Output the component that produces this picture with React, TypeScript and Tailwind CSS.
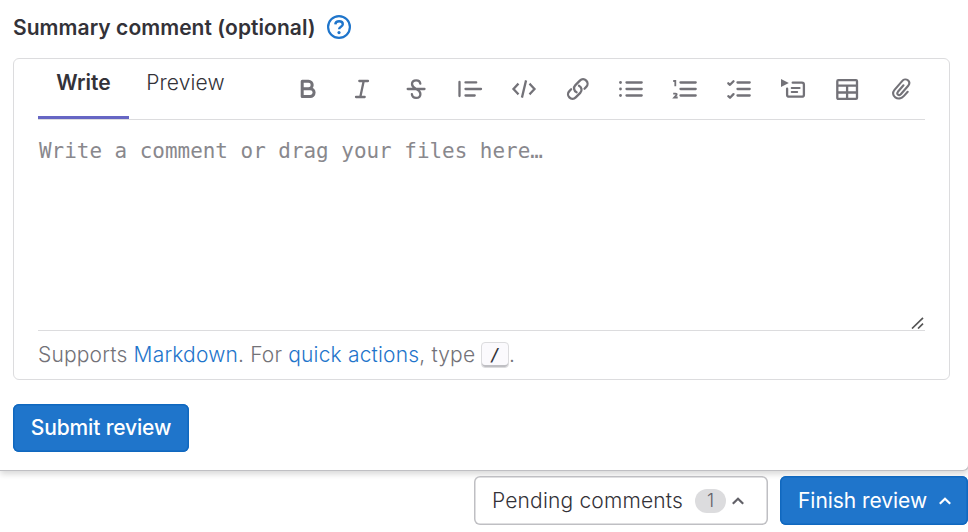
import React from "react";

type IconProps = { children: React.ReactNode };

function ToolIcon({ children }: IconProps) {
  return (
    <button className="flex h-6 w-6 shrink-0 items-center justify-center text-[#737278]">
      <svg
        className="h-6 w-6 overflow-visible"
        viewBox="0 0 24 24"
        fill="none"
        stroke="currentColor"
        strokeWidth="2.3"
        strokeLinecap="round"
        strokeLinejoin="round"
      >
        {children}
      </svg>
    </button>
  );
}

function Toolbar() {
  return (
    <div className="mt-[18px] flex gap-[29.9px]">
      <ToolIcon>
        <path strokeWidth="3" d="M6.200 4.300h6.300a3.700 3.700 0 0 1 0 7.400H6.200zM6.200 11.700h8a3.900 3.900 0 0 1 0 7.800h-8z" />
      </ToolIcon>
      <ToolIcon>
        <path d="M9.300 4H18M6 20h8.700M13.700 4l-3.400 16" />
      </ToolIcon>
      <ToolIcon>
        <path d="M3.700 12h16.800M16.300 6.600c-.2-2-1.800-3.300-4.100-3.300-2.500 0-4.200 1.600-4.200 3.800 0 2.300 1.900 3.700 4.200 4.900 2.600 1.300 4.200 2.600 4.200 4.900 0 2.300-1.700 4-4.300 4-2.300 0-4-1.500-4.200-3.700" />
      </ToolIcon>
      <ToolIcon>
        <path d="M1.500 5v14M7.500 5.400h10.700M7.500 12h15.500M7.500 18.500h9.200" />
      </ToolIcon>
      <ToolIcon>
        <path strokeLinecap="square" strokeLinejoin="miter" d="M5.700 7.500 1.500 12l4.200 4.500M18.300 7.500l4.200 4.500-4.200 4.500M13.800 4.500l-3.600 15" />
      </ToolIcon>
      <ToolIcon>
        <path transform="translate(.8 0)" d="M13.190 8.688a4.500 4.500 0 0 1 1.242 7.244l-4.500 4.500a4.500 4.500 0 0 1-6.364-6.364l1.757-1.757m13.350-.622 1.757-1.757a4.500 4.500 0 0 0-6.364-6.364l-4.500 4.500a4.500 4.500 0 0 0 1.242 7.244" />
      </ToolIcon>
      <ToolIcon>
        <path d="M7.500 5.500H22.700M7.500 12H22.700M7.500 18.500H22.700" />
        <g fill="currentColor" stroke="none">
          <circle cx="1.500" cy="5.500" r="1.400" />
          <circle cx="1.500" cy="12" r="1.400" />
          <circle cx="1.500" cy="18.500" r="1.400" />
        </g>
      </ToolIcon>
      <ToolIcon>
        <path d="M7.500 5.500H22.700M7.500 12H22.700M7.500 18.500H22.700" />
        <path strokeWidth="1.800" strokeLinecap="butt" strokeLinejoin="miter" d="M.2 4h2.100v5.200M.2 16.600h2.300q1.500 0 1.100 1.200L1.200 20.500h3.500" />
      </ToolIcon>
      <ToolIcon>
        <path d="M10.500 5.500H22.700M10.500 12H22.700M10.500 18.500H22.700" />
        <path d="M1.300 6.300 3 7.800l3.500-3.600M1.300 19.200 3 20.700l3.500-3.600" />
      </ToolIcon>
      <ToolIcon>
        <path fill="currentColor" stroke="none" d="M0 2l7.800 4L0 9.900z" />
        <path d="M11.700 5.700h9.200a2 2 0 0 1 2 2v10a2 2 0 0 1-2 2H8.100a2 2 0 0 1-2-2v-6" />
        <path strokeWidth="2" d="M10.700 11h7.900M10.700 15h5.500" />
      </ToolIcon>
      <ToolIcon>
        <rect x="2.300" y="3.200" width="19.700" height="18.700" rx="1" />
        <path strokeLinecap="butt" d="M2.300 8.700H22M2.300 15.500H22M12.100 8.700v13.200" />
      </ToolIcon>
      <ToolIcon>
        <path strokeWidth="2.100" d="m18.700 14.800-3.700 4.100c-2.500 2.700-6 3.500-8.700 1.500-2.600-2-2.900-5-.8-7.500l7.600-8.800c1.700-2 4.200-2.100 5.800-.8 1.700 1.500 1.900 3.500.3 5.400l-7.400 8.500c-.9 1.100-2 1.200-2.800.5-.9-.8-.9-1.900-.1-2.900l5.600-6.500" />
      </ToolIcon>
    </div>
  );
}

function Chevron({ className }: { className: string }) {
  return (
    <svg className={className} viewBox="0 0 12 8" fill="none" stroke="currentColor" strokeWidth="2.200">
      <path d="M.8 6.800 6 1.700l5.200 5.100" />
    </svg>
  );
}

export default function App() {
  return (
    <div className="flex h-[532px] w-[968px] flex-col overflow-hidden bg-white font-['Inter',sans-serif] text-[21px] leading-[30px] font-[350] text-[#333238]">
      <section className="h-[471px] w-[969px] shrink-0 rounded-br-[6px] border-r border-b border-[#bfbfc3] bg-white pl-[13px] shadow-[0_3px_6px_rgba(0,0,0,0.16)]">
        <header className="flex h-[58px] items-center pb-1">
          <h1 className="w-[302px] pt-[2px] text-[21px] font-semibold tracking-[0.05px] whitespace-nowrap">Summary comment (optional)</h1>
          <svg className="ml-3 h-6 w-6" viewBox="0 0 24 24" fill="none" stroke="#1f75cb" strokeWidth="2.200">
            <circle cx="12" cy="12" r="10.900" />
            <path strokeWidth="2.400" d="M8.300 9.400c.2-2 1.700-3.100 3.800-3.100 2.200 0 3.700 1.200 3.700 3 0 2.500-3.700 2.500-3.700 5" />
            <circle cx="12" cy="17.600" r="1.600" fill="#1f75cb" stroke="none" />
          </svg>
        </header>
        <div className="flex h-[322px] w-[937px] flex-col rounded-[6px] border border-[#dcdcde] px-6">
          <div className="flex h-[61px] shrink-0 border-b border-[#dcdcde]">
            <button className="h-[60px] w-[91px] border-b-[3px] border-[#6666c4] pb-[9px] text-center font-semibold">Write</button>
            <button className="h-[60px] w-[113px] pb-[12px] text-center tracking-[0.120px]">Preview</button>
            <div className="ml-[54px]">
              <Toolbar />
            </div>
          </div>
          <div className="flex h-[211px] shrink-0 flex-col justify-between border-b border-[#dcdcde]">
            <p className="mt-4 ml-[1px] font-['DejaVu_Sans_Mono',monospace] text-[20.930px] whitespace-nowrap text-[#89888d]">Write a comment or drag your files here…</p>
            <svg className="mr-[1px] mb-[1px] h-3 w-[13px] self-end" viewBox="0 0 13 12" stroke="#555" strokeWidth="1.700">
              <path d="M1 11.500 12 .8M7 11.500 12 6.700" />
            </svg>
          </div>
          <p className="flex h-[48px] items-center text-[#737278]">
            <span className="w-[443px] tracking-[0.170px] whitespace-nowrap">
              Supports <a className="text-[#1f75cb]">Markdown</a>. For <a className="text-[#1f75cb]">quick actions</a>, type
            </span>
            <kbd className="h-[26px] w-[28px] rounded-[4px] border border-[#dcdcde] bg-[#fbfafd] text-center font-['DejaVu_Sans_Mono',monospace] text-[18px] leading-[24px] text-[#333238] shadow-[inset_0_-2px_0_#bfbfc3]">/</kbd>
            <span>.</span>
          </p>
        </div>
        <button className="mt-6 flex h-[48px] w-[176px] items-center justify-center rounded-[6px] bg-[#1f75cb] font-medium tracking-[-0.150px] whitespace-nowrap text-white shadow-[inset_0_0_0_1.500px_#1068bf]">
          Submit review
        </button>
      </section>
      <footer className="flex justify-end gap-3 pt-[5px]">
        <button className="relative flex h-[49px] w-[294px] items-center rounded-[6px] bg-white pl-[18px] whitespace-nowrap shadow-[inset_0_0_0_1.500px_#bfbfc3]">
          <span className="w-[191px] text-left tracking-[0.170px]">Pending comments</span>
          <span className="ml-3 h-6 w-[31px] rounded-full bg-[#dcdcde] text-center text-[18px] leading-6 text-[#626168]">1</span>
          <Chevron className="ml-[6px] h-2 w-3 text-[#626168]" />
        </button>
        <button className="flex h-[49px] w-[188px] items-center rounded-[6px] bg-[#1f75cb] pl-[18px] font-normal whitespace-nowrap text-white shadow-[inset_0_0_0_1.500px_#1068bf]">
          <span className="w-[129px] text-left tracking-[-0.050px]">Finish review</span>
          <Chevron className="ml-[12px] h-2 w-3" />
        </button>
      </footer>
    </div>
  );
}
